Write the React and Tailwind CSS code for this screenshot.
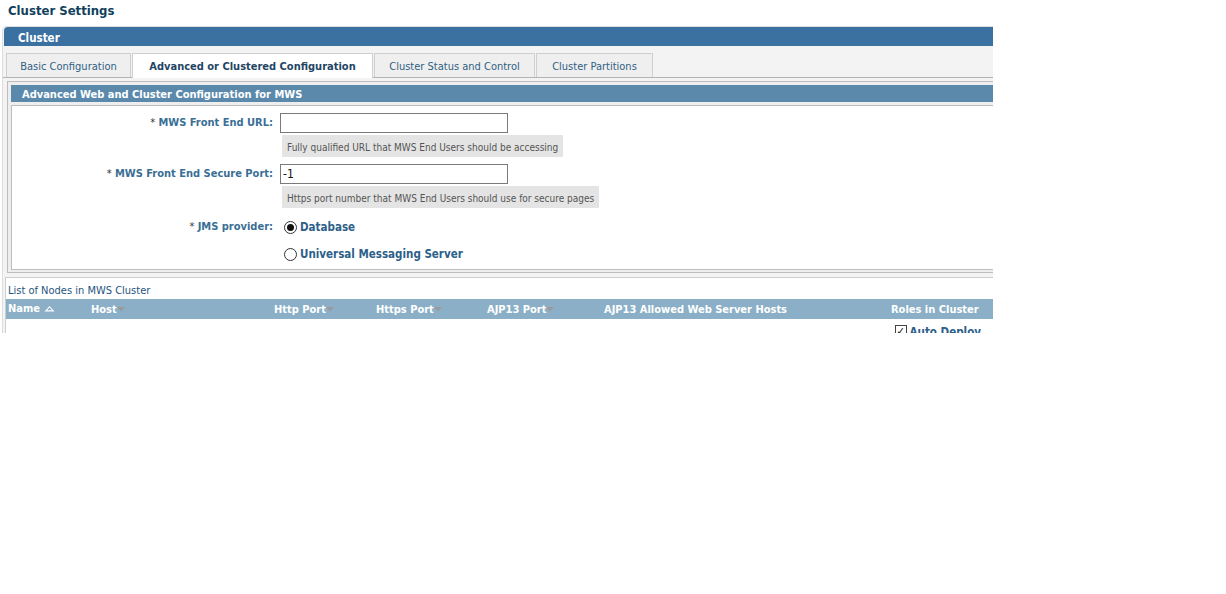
import React from 'react';

const font = { fontFamily: '"DejaVu Sans Condensed", "DejaVu Sans", Tahoma, sans-serif' };

const SortDown = () => (
  <svg width="8" height="5" viewBox="0 0 8 5" className="self-start mt-[4px]">
    <path d="M0 0 L8 0 L4 4.5 Z" fill="#9a9a9a" />
  </svg>
);

const SortUp = () => (
  <svg width="11" height="7" viewBox="0 0 11 7" className="ml-[4px]">
    <path d="M0.5 6.5 L5.5 1 L10.5 6.5 Z" fill="#ffffff" />
    <path d="M3 5.3 L5.5 2.6 L8 5.3 Z" fill="#8aafc6" />
  </svg>
);

const Radio = ({ checked }) => (
  <span className="w-[13px] h-[13px] rounded-full border border-[#333] bg-white flex items-center justify-center shrink-0">
    {checked && <span className="w-[7px] h-[7px] rounded-full bg-[#111]" />}
  </span>
);

const Label = ({ children }) => (
  <div className="w-[268px] pr-[7px] text-right font-bold text-[#3a6f95] text-[11px] leading-[14px]">
    <span className="text-[#333] font-normal">* </span>
    {children}
  </div>
);

const FieldRow = ({ label, value, hint }) => (
  <div className="flex">
    <div className="pt-[3px]">
      <Label>{label}</Label>
    </div>
    <div className="flex flex-col">
      <div className="w-[228px] h-[20px] border border-[#7a7a7a] bg-white text-[12px] text-[#111] px-[2px] leading-[18px]">
        {value}
      </div>
      <div className="mt-[2px] ml-[2px] self-start h-[22px] bg-[#e4e4e4] px-[5px] flex items-center pt-[2px] text-[10px] text-[#555]">
        {hint}
      </div>
    </div>
  </div>
);

const Tab = ({ children, w, active }) =>
  active ? (
    <div className={`${w} ml-[1px] h-[25px] border border-b-0 border-[#cfcfcf] bg-white font-bold text-[#1f4564] flex items-center justify-center pt-[3px] -mb-px`}>
      {children}
    </div>
  ) : (
    <div className={`${w} ml-[1px] h-[24px] border border-b-0 border-[#cfcfcf] bg-[#efefef] text-[#2f5f83] flex items-center justify-center pt-[4px]`}>
      {children}
    </div>
  );

export default function App() {
  return (
    <div className="w-[1226px] h-[594px] bg-white" style={font}>
      <div className="w-[993px] h-[333px] overflow-hidden">
        <div className="pl-[8px] pt-[1px] h-[26px] text-[13px] font-bold text-[#123f5c]">Cluster Settings</div>

        <div className="ml-[2px] border-l border-t border-[#dedede] rounded-tl-[5px] bg-[#f3f3f3]">
          <div className="h-[19px] bg-[#3b71a0] rounded-tl-[4px] ml-[1px] pl-[14px] pt-[3px] text-[11.5px] font-bold text-white leading-[16px]">
            Cluster
          </div>

          <div className="flex items-end h-[32px] pl-[2px] border-b border-[#b3b3b3] text-[11px]">
            <Tab w="w-[125px]">Basic Configuration</Tab>
            <Tab w="w-[241px]" active>Advanced or Clustered Configuration</Tab>
            <Tab w="w-[161px]">Cluster Status and Control</Tab>
            <Tab w="w-[117px]">Cluster Partitions</Tab>
          </div>

          <div className="pt-[3px] pl-[4px]">
            <div className="border-l border-t border-b border-[#bdbdbd] bg-[#eeeeee] pl-[3px] pt-[3px] pb-[2px]">
              <div className="h-[17px] bg-[#5a89ab] pl-[11px] pt-[2px] text-[11px] font-bold text-white leading-[15px]">
                Advanced Web and Cluster Configuration for MWS
              </div>
              <div className="mt-[3px] border-l border-t border-b border-[#bdbdbd] bg-white h-[165px] pt-[7px] flex flex-col gap-[7px]">
                <FieldRow label="MWS Front End URL:" value="" hint="Fully qualified URL that MWS End Users should be accessing" />
                <FieldRow label="MWS Front End Secure Port:" value="-1" hint="Https port number that MWS End Users should use for secure pages" />
                <div className="flex mt-[3px]">
                  <div className="pt-[2px]">
                    <Label>JMS provider:</Label>
                  </div>
                  <div className="flex flex-col gap-[13px] pl-[4px] pt-[2px] text-[11.5px] font-bold text-[#2d6089] leading-[13px]">
                    <div className="flex items-center gap-[3px]">
                      <Radio checked />
                      <span className="pt-[1px]">Database</span>
                    </div>
                    <div className="flex items-center gap-[3px]">
                      <Radio />
                      <span className="pt-[1px]">Universal Messaging Server</span>
                    </div>
                  </div>
                </div>
              </div>
            </div>
          </div>

          <div className="mt-[4px] ml-[2px] border-l border-t border-[#cfcfcf] bg-white">
            <div className="h-[21px] pl-[2px] pt-[6px] text-[11px] text-[#1f5580] leading-[14px]">
              List of Nodes in MWS Cluster
            </div>
            <div className="h-[20px] bg-[#8aafc6] flex items-center pt-[2px] text-[11px] font-bold text-white leading-[14px]">
              <div className="w-[85px] pl-[2px] flex items-center -mt-[3px]">Name<SortUp /></div>
              <div className="w-[183px] flex">Host<SortDown /></div>
              <div className="w-[102px] flex">Http Port<SortDown /></div>
              <div className="w-[111px] flex">Https Port<SortDown /></div>
              <div className="w-[117px] flex">AJP13 Port<SortDown /></div>
              <div className="w-[287px]">AJP13 Allowed Web Server Hosts</div>
              <div>Roles in Cluster</div>
            </div>
            <div className="h-[40px] flex justify-end pr-[12px] pt-[5px]">
              <div className="flex items-start gap-[3px] text-[11.5px] font-bold text-[#2d6089]">
                <span className="w-[12px] h-[12px] mt-[1px] border border-[#444] bg-white flex items-center justify-center text-[11px] leading-none text-black">✓</span>
                Auto Deploy
              </div>
            </div>
          </div>
        </div>
      </div>
    </div>
  );
}
